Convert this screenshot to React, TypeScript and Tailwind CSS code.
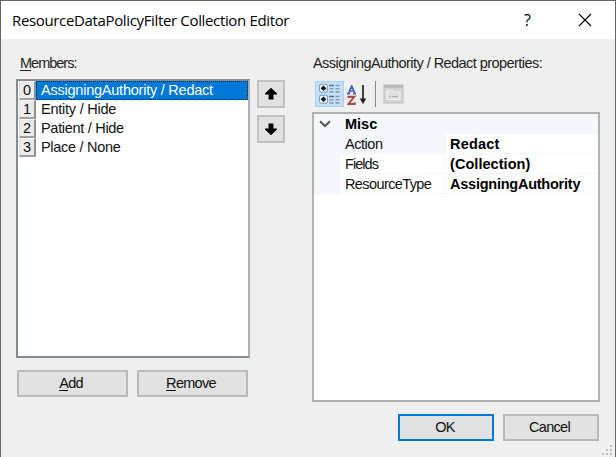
import type { ReactNode } from 'react';

const members = [
  { name: 'AssigningAuthority / Redact', cls: 'tracking-[-0.23px]' },
  { name: 'Entity / Hide', cls: 'tracking-[-0.23px]' },
  { name: 'Patient / Hide', cls: 'tracking-[-0.3px]' },
  { name: 'Place / None', cls: 'tracking-[-0.3px]' },
];

const properties = [
  { name: 'Action', value: 'Redact', active: true, cls: 'tracking-[-0.45px]', valueCls: 'tracking-[0.2px]' },
  { name: 'Fields', value: '(Collection)', active: false, cls: 'tracking-[-0.95px]', valueCls: 'tracking-[0.05px]' },
  { name: 'ResourceType', value: 'AssigningAuthority', active: false, cls: 'tracking-[-0.6px]', valueCls: 'tracking-[-0.24px]' },
];

function Button({ children, className = '' }: { children: ReactNode; className?: string }) {
  return (
    <button
      className={`flex items-center justify-center border-2 bg-[#e1e1e1] text-[14.5px] leading-none tracking-[-0.7px] ${className}`}
    >
      {children}
    </button>
  );
}

function Arrow({ down = false }: { down?: boolean }) {
  return (
    <svg width="14" height="14" viewBox="0 0 14 14" className={down ? 'rotate-180' : ''}>
      <path d="M7 0.7 L13 6.6 V7.6 H9.5 V12.6 H4.6 V7.6 H1 V6.6 Z" fill="#000" />
    </svg>
  );
}

function CategorizedIcon() {
  return (
    <svg width="24" height="22" viewBox="0 0 24 22">
      {[1, 12].map((y) => (
        <g key={y}>
          <rect x="1.5" y={y + 0.2} width="8" height="8" rx="1.5" fill="#e8f2fa" stroke="#829ab0" />
          <path d={`M5.5 ${y + 1.4}L8.3 ${y + 4.2}L5.5 ${y + 7}L2.7 ${y + 4.2}Z`} fill="#101820" />
          <path d={`M11 ${y + 1.5}h5`} stroke="#5d6d7c" strokeWidth="1.5" />
          <path
            d={`M17.5 ${y + 1.5}h4M11.5 ${y + 4.7}h4M17.5 ${y + 4.7}h4M11.5 ${y + 7.9}h4M17.5 ${y + 7.9}h4`}
            stroke="#8c9dae"
            strokeWidth="1.6"
          />
        </g>
      ))}
    </svg>
  );
}

function SortIcon() {
  return (
    <svg width="20" height="22" viewBox="0 0 20 22" fill="none">
      <path d="M1.5 8.5 4.7 1 8 8.5M2.5 6H7M0 8.7H3.2M6 8.7H9" stroke="#4664b4" strokeWidth="1.7" />
      <path d="M1.5 13V11.8H7.3L1.5 19H7.8V17.3" stroke="#a7464b" strokeWidth="1.9" />
      <path d="M16 0V16" stroke="#404040" strokeWidth="2" />
      <path d="M12.7 13.5H19.3L16 19Z" fill="#202020" />
    </svg>
  );
}

function PagesIcon() {
  return (
    <svg width="21" height="20" viewBox="0 0 21 20" fill="none">
      <rect x="1" y="1" width="19" height="18" fill="#d4d4d4" stroke="#bdbdbd" />
      <path d="M1 2.5H20" stroke="#bababa" strokeWidth="3" />
      <path d="M4 15.5V8L5.5 6.5H9.5L11 8H17V15.5Z" fill="#dedede" stroke="#f0f0f0" strokeWidth="1.2" />
      <path d="M6 12.5H7.5M9 12.5H15" stroke="#b0b0b0" />
    </svg>
  );
}

export default function App() {
  return (
    <div className="flex h-[457px] w-[616px] flex-col overflow-hidden border-x border-t border-[#666] bg-[#efefef] font-['Liberation_Sans',sans-serif] text-[14.5px] leading-none text-[#111]">
      <header className="flex h-[38px] shrink-0 items-center bg-white pl-[11px] font-['Open_Sans',sans-serif] text-black">
        <h1 className="w-[512px] whitespace-nowrap text-[15px] tracking-[-0.35px]">
          ResourceDataPolicyFilter Collection Editor
        </h1>
        <span className="w-[54px] text-[16px]">?</span>
        <svg width="14" height="14" viewBox="0 0 14 14">
          <path d="M1 1 13 13M13 1 1 13" stroke="#000" strokeWidth="1.2" />
        </svg>
      </header>

      <main className="flex grow pl-[15px]">
        <section className="w-[234px] shrink-0 pt-[16px]">
          <div className="h-[24px] pl-1 leading-[16px] tracking-[-1px] text-[#222]">
            <span className="underline underline-offset-2">M</span>embers:
          </div>
          <div className="h-[279px] border-2 border-t-[#858b93] border-r-[#abafb6] border-b-[#858b93] border-l-[#858b93] bg-white">
            {members.map((member, index) => (
              <div key={member.name} className="flex h-[19px] pl-px">
                <span className="flex w-[17px] shrink-0 items-center justify-center border-t border-r-2 border-b-2 border-l border-t-[#f8f8f8] border-r-[#909090] border-b-[#a0a0a0] border-l-[#ddd] bg-[#ececec]">
                  {index}
                </span>
                <span
                  className={`flex grow items-center whitespace-nowrap border border-dotted pl-[4px] ${member.cls} ${
                    index === 0 ? 'border-[#092d50] bg-[#0078d7] text-white' : 'border-transparent'
                  }`}
                >
                  {member.name}
                </span>
              </div>
            ))}
          </div>
          <div className="mt-[12px] flex gap-[9px] pl-px">
            <Button className="h-[27px] w-[111px] border-[#b9b9b9] pr-[3px]">
              <span>
                <span className="underline underline-offset-2">A</span>dd
              </span>
            </Button>
            <Button className="h-[27px] w-[111px] border-[#b9b9b9] pr-[3px]">
              <span>
                <span className="underline underline-offset-2">R</span>emove
              </span>
            </Button>
          </div>
        </section>

        <div className="flex w-[62px] shrink-0 flex-col gap-[7px] pt-[41px] pl-[7px]">
          <Button className="size-[28px] border-[#c1c1c1]">
            <Arrow />
          </Button>
          <Button className="size-[28px] border-[#c1c1c1]">
            <Arrow down />
          </Button>
        </div>

        <section className="w-[288px] shrink-0 pt-[16px]">
          <div className="h-[26px] whitespace-nowrap pl-px leading-[16px] tracking-[-0.55px] text-[#222]">
            AssigningAuthority / Redact <span className="underline underline-offset-2">p</span>roperties:
          </div>
          <div className="flex h-[31px] items-start pl-[3px]">
            <span className="flex h-[26px] w-[29px] items-center justify-center border border-[#a9d1f2] bg-[#c2e0f7]">
              <CategorizedIcon />
            </span>
            <span className="ml-[3px] pt-[4px]">
              <SortIcon />
            </span>
            <span className="ml-[8px] h-[26px] w-px bg-[#888]" />
            <span className="ml-[7px] pt-[3px]">
              <PagesIcon />
            </span>
          </div>
          <div className="h-[290px] border-2 border-[#b2b2b2] bg-white">
            <div className="flex h-[20px] items-center bg-[#f4f7fc]">
              <svg width="12" height="8" viewBox="0 0 12 8" className="ml-[5px]" fill="none">
                <path d="M1 1.2 6 6 11 1.2" stroke="#555" strokeWidth="2" />
              </svg>
              <b className="ml-[14px] text-black">Misc</b>
            </div>
            {properties.map((property) => (
              <div key={property.name} className="flex h-5 bg-[#f4f7fc] pl-[26px]">
                <span
                  className={`mb-px flex w-[105px] shrink-0 items-center pt-px pl-[5px] ${property.cls} ${
                    property.active ? 'bg-[#f4f7fc]' : 'bg-white'
                  }`}
                >
                  {property.name}
                </span>
                <b
                  className={`mb-px ml-px flex grow items-center bg-white pt-px pl-[4px] whitespace-nowrap text-black ${property.valueCls}`}
                >
                  {property.value}
                </b>
              </div>
            ))}
          </div>
          <div className="mt-[12px] flex justify-end gap-[9px] pr-px">
            <Button className="h-[27px] w-[96px] border-[#0078d7] pr-[2px]">OK</Button>
            <Button className="h-[27px] w-[96px] border-[#b9b9b9] pr-[3px]">Cancel</Button>
          </div>
        </section>

        <svg width="12" height="12" viewBox="0 0 12 12" className="-mr-px ml-[2px] shrink-0 self-end" fill="#bdbdbd">
          <path d="M8 0h2v2h-2zM4 4h2v2h-2zM8 4h2v2h-2zM0 8h2v2h-2zM4 8h2v2h-2zM8 8h2v2h-2z" />
        </svg>
      </main>
    </div>
  );
}
